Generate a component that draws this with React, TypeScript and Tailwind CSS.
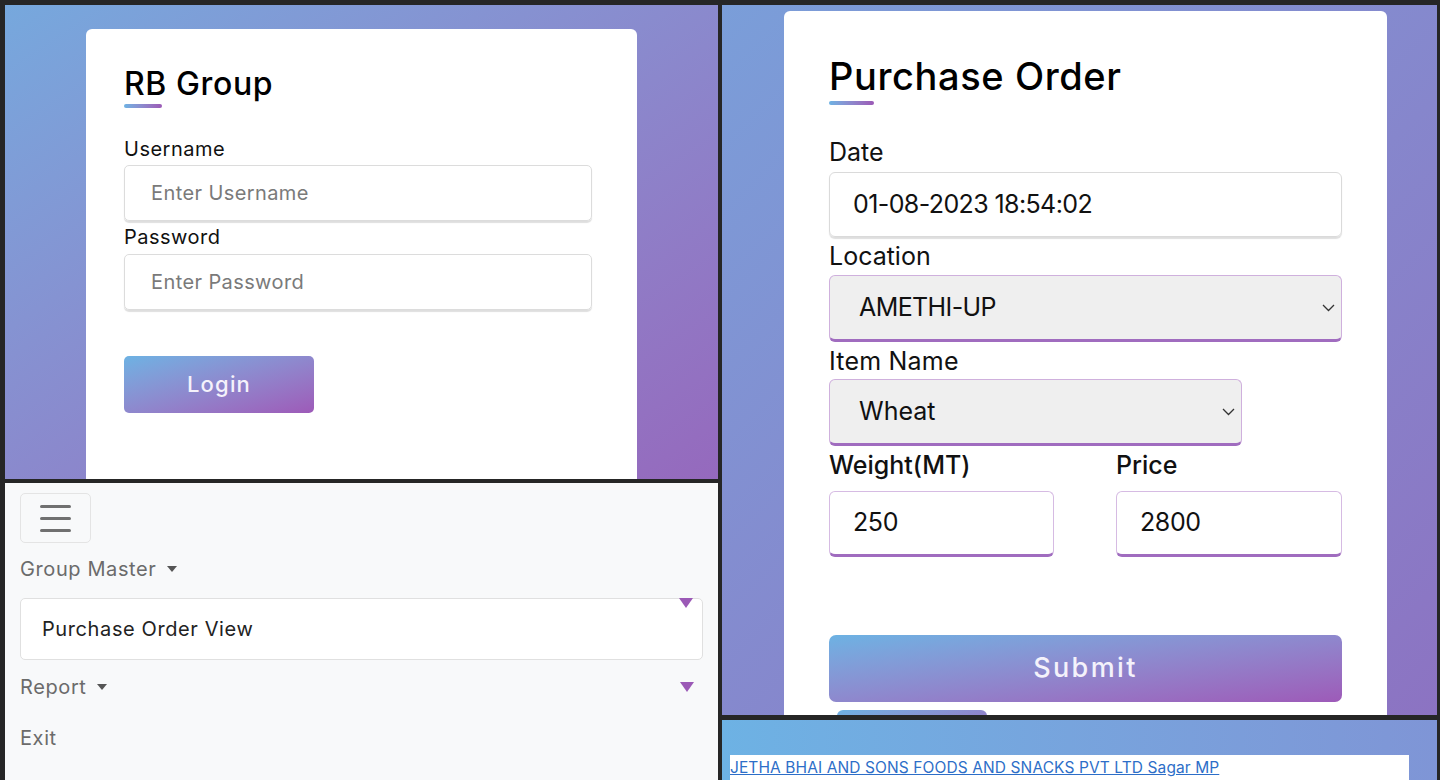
import React from 'react';

const btnGrad = 'bg-linear-to-br from-[#6cb2e3] to-[#9d5ab8]';
const barGrad = 'bg-linear-to-r from-[#6cb2e3] to-[#9b59b6]';

function Chevron() {
  return (
    <svg width="13" height="8" viewBox="0 0 13 8" fill="none" stroke="#333" strokeWidth="1.3">
      <polyline points="1,1 6.5,6.5 12,1" />
    </svg>
  );
}

function Caret() {
  return (
    <span className="inline-block h-0 w-0 border-l-[5px] border-r-[5px] border-t-[6px] border-l-transparent border-r-transparent border-t-[#555]" />
  );
}

function PurpleCaret() {
  return (
    <span className="inline-block h-0 w-0 border-l-[7px] border-r-[7px] border-t-[10px] border-l-transparent border-r-transparent border-t-[#9b59b6]" />
  );
}

function LoginCard() {
  return (
    <section className="h-[474px] overflow-hidden bg-linear-to-br from-[#76a8dd] to-[#9569bd]">
      <div className="ml-[81px] mt-[24px] h-full w-[551px] rounded-t-[6px] bg-white pl-[38px] pt-[36px]">
        <h1 className="text-[32px] font-medium leading-[37px] tracking-[0.6px] text-black">RB Group</h1>
        <div className={`mt-[2px] h-[4px] w-[38px] rounded-full ${barGrad}`} />

        <label className="mt-[29px] block text-[20px] leading-[24px] tracking-[0.5px] text-[#111]">Username</label>
        <input
          readOnly
          placeholder="Enter Username"
          className="mt-[4px] h-[56px] w-[468px] rounded-[5px] border border-[#dcdcdc] pl-[26px] text-[20px] tracking-[0.4px] shadow-[0_2px_1px_rgba(0,0,0,0.13)] outline-none placeholder:text-[#7a7a7a]"
        />

        <label className="mt-[4px] block text-[20px] leading-[24px] tracking-[0.5px] text-[#111]">Password</label>
        <input
          readOnly
          placeholder="Enter Password"
          className="mt-[5px] h-[56px] w-[468px] rounded-[5px] border border-[#dcdcdc] pl-[26px] text-[20px] tracking-[0.4px] shadow-[0_2px_1px_rgba(0,0,0,0.13)] outline-none placeholder:text-[#7a7a7a]"
        />

        <button
          className={`mt-[46px] flex h-[57px] w-[190px] items-center justify-center rounded-[5px] text-[22px] font-medium tracking-[1.2px] text-[#f4f2fb] ${btnGrad}`}
        >
          Login
        </button>
      </div>
    </section>
  );
}

function SideMenu() {
  return (
    <section className="h-[297px] overflow-hidden bg-[#f8f9fa] px-[15px] pt-[10px]">
      <button className="flex h-[50px] w-[71px] flex-col items-center justify-center gap-[9px] rounded-[5px] border border-[#e4e4e4]">
        <span className="h-[3px] w-[31px] rounded-full bg-[#707070]" />
        <span className="h-[3px] w-[31px] rounded-full bg-[#707070]" />
        <span className="h-[3px] w-[31px] rounded-full bg-[#707070]" />
      </button>

      <div className="mt-[14px] flex items-center gap-[11px] text-[20px] leading-[24px] tracking-[0.6px] text-[#6b6b6b]">
        Group Master
        <Caret />
      </div>

      <div className="relative mt-[17px] flex h-[62px] items-center rounded-[5px] border border-[#e0e0e0] bg-white pl-[21px] text-[20px] tracking-[0.6px] text-[#222]">
        Purchase Order View
        <span className="absolute right-[9px] top-[-1px] flex">
          <PurpleCaret />
        </span>
      </div>

      <div className="mt-[15px] flex items-center justify-between pr-[9px] text-[20px] leading-[24px] tracking-[0.6px] text-[#6b6b6b]">
        <span className="flex items-center gap-[11px]">
          Report
          <Caret />
        </span>
        <PurpleCaret />
      </div>

      <div className="mt-[27px] text-[20px] leading-[24px] tracking-[0.6px] text-[#6b6b6b]">Exit</div>
    </section>
  );
}

function PurchaseOrder() {
  return (
    <section className="h-[712px] overflow-hidden bg-linear-to-br from-[#7a9ed9] to-[#8c73c2]">
      <div className="ml-[62px] mt-[6px] h-full w-[603px] rounded-t-[6px] bg-white pl-[45px] pt-[42px]">
        <h1 className="text-[38px] font-medium leading-[46px] tracking-[0.6px] text-black">Purchase Order</h1>
        <div className={`mt-[2px] h-[4px] w-[45px] rounded-full ${barGrad}`} />

        <label className="mt-[32px] block text-[25px] leading-[30px] text-[#111]">Date</label>
        <div className="mt-[5px] flex h-[65px] w-[513px] items-center rounded-[6px] border border-[#dadada] pl-[23px] text-[25px] tracking-[-0.6px] text-[#111] shadow-[0_2px_1px_rgba(0,0,0,0.13)]">
          01-08-2023 18:54:02
        </div>

        <label className="mt-[4px] block text-[25px] leading-[30px] text-[#111]">Location</label>
        <div className="mt-[4px] flex h-[67px] w-[513px] items-center justify-between rounded-[6px] border border-[#cfb0dd] border-b-[3px] border-b-[#a06cbf] bg-[#efefef] pl-[29px] pr-[6px] text-[25px] tracking-[-0.6px] text-[#111]">
          AMETHI-UP
          <Chevron />
        </div>

        <label className="mt-[4px] block text-[25px] leading-[30px] tracking-[0.2px] text-[#111]">Item Name</label>
        <div className="mt-[3px] flex h-[67px] w-[413px] items-center justify-between rounded-[6px] border border-[#cfb0dd] border-b-[3px] border-b-[#a06cbf] bg-[#efefef] pl-[29px] pr-[6px] text-[25px] text-[#111]">
          Wheat
          <Chevron />
        </div>

        <div className="mt-[4px] grid w-[513px] grid-cols-[287px_226px]">
          <div>
            <label className="block text-[25px] font-medium leading-[30px] text-[#111]">Weight(MT)</label>
            <div className="mt-[11px] flex h-[66px] w-[225px] items-center rounded-[6px] border border-[#d6bbe3] border-b-[3px] border-b-[#a06cbf] pl-[23px] text-[25px] tracking-[-0.4px] text-[#111]">
              250
            </div>
          </div>
          <div>
            <label className="block text-[25px] font-medium leading-[30px] text-[#111]">Price</label>
            <div className="mt-[11px] flex h-[66px] w-[226px] items-center rounded-[6px] border border-[#d6bbe3] border-b-[3px] border-b-[#a06cbf] pl-[23px] text-[25px] tracking-[-0.4px] text-[#111]">
              2800
            </div>
          </div>
        </div>

        <button
          className={`mt-[78px] flex h-[67px] w-[513px] items-center justify-center rounded-[7px] text-[27px] font-medium tracking-[2.4px] text-[#f4f2fb] ${btnGrad}`}
        >
          Submit
        </button>
        <div className={`ml-[8px] mt-[8px] h-[40px] w-[150px] rounded-[6px] ${btnGrad}`} />
      </div>
    </section>
  );
}

function CompanyStrip() {
  return (
    <section className="h-[60px] overflow-hidden bg-linear-to-r from-[#6db2e4] to-[#7f95d6] pl-[8px] pt-[35px]">
      <div className="h-[30px] w-[679px] bg-white">
        <a href="#" className="text-[15.5px] leading-[20px] tracking-[0.1px] text-[#2d6ec8] underline">
          JETHA BHAI AND SONS FOODS AND SNACKS PVT LTD Sagar MP
        </a>
      </div>
    </section>
  );
}

export default function App() {
  return (
    <div className="flex h-[780px] w-[1440px] gap-[4px] overflow-hidden bg-[#262626] pl-[5px] pr-[3px] pt-[5px] font-['Inter',sans-serif]">
      <div className="flex w-[713px] flex-col gap-[4px]">
        <LoginCard />
        <SideMenu />
      </div>
      <div className="flex flex-1 flex-col gap-[5px]">
        <PurchaseOrder />
        <CompanyStrip />
      </div>
    </div>
  );
}
